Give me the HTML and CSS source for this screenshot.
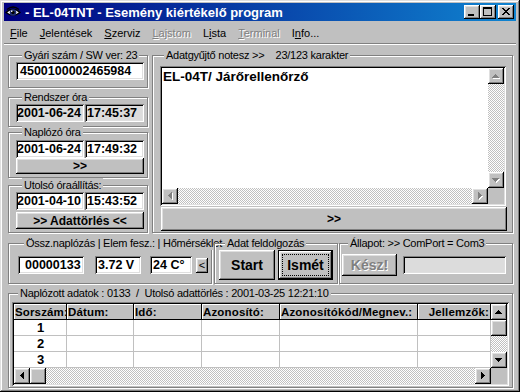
FILE: index.html
```html
<!DOCTYPE html>
<html lang="hu">
<head>
<meta charset="utf-8">
<title>EL-04TNT - Esemény kiértékelő program</title>
<link rel="stylesheet" href="styles.css">
</head>
<body>
<svg class="defs" width="0" height="0" aria-hidden="true">
  <defs>
    <symbol id="up" viewBox="0 0 16 16"><path d="M7 6h1v1H7zM6 7h3v1H6zM5 8h5v1H5zM4 9h7v1H4z"/></symbol>
    <symbol id="down" viewBox="0 0 16 16"><path d="M4 6h7v1H4zM5 7h5v1H5zM6 8h3v1H6zM7 9h1v1H7z"/></symbol>
    <symbol id="left" viewBox="0 0 16 16"><path d="M6 7h1v1H6zM7 6h1v3H7zM8 5h1v5H8zM9 4h1v7H9z"/></symbol>
    <symbol id="right" viewBox="0 0 16 16"><path d="M6 4h1v7H6zM7 5h1v5H7zM8 6h1v3H8zM9 7h1v1H9z"/></symbol>
  </defs>
</svg>
<div class="win">
  <div class="titlebar">
    <svg class="appicon" viewBox="0 0 16 16" width="16" height="16">
      <path d="M1 8.5 Q8 2 15 8.5 Q8 14 1 8.5Z" fill="#fff" stroke="#000" stroke-width="1.4"/>
      <circle cx="8" cy="8.5" r="3.3" fill="#20307a"/>
      <circle cx="8" cy="8.5" r="1.7" fill="#000"/>
      <rect x="6" y="6.5" width="1.4" height="1.4" fill="#fff"/>
      <path d="M2 5.5 Q8 0.5 14 5.5" fill="none" stroke="#000" stroke-width="1.3"/>
    </svg>
    <span class="title">- EL-04TNT - Esemény kiértékelő program</span>
    <div class="tbtns">
      <span class="tb"><svg viewBox="0 0 16 14" width="16" height="14"><rect x="4" y="9" width="6" height="2"/></svg></span>
      <span class="tb"><svg viewBox="0 0 16 14" width="16" height="14"><rect x="3" y="2" width="9" height="9"/><rect x="4" y="4" width="7" height="6" fill="#c0c0c0"/></svg></span>
      <span class="tb close"><svg viewBox="0 0 16 14" width="16" height="14"><path d="M4 3h2v1H4zM10 3h2v1h-2zM5 4h2v1H5zM9 4h2v1H9zM6 5h4v1H6zM7 6h2v1H7zM6 7h4v1H6zM5 8h2v1H5zM9 8h2v1H9zM4 9h2v1H4zM10 9h2v1h-2z"/></svg></span>
    </div>
  </div>
  <div class="menubar">
    <span class="mi"><u>F</u>ile</span>
    <span class="mi"><u>J</u>elentések</span>
    <span class="mi"><u>S</u>zerviz</span>
    <span class="mi dis"><u>L</u>ajstom</span>
    <span class="mi">L<u>i</u>sta</span>
    <span class="mi dis"><u>T</u>erminal</span>
    <span class="mi">I<u>n</u>fo...</span>
  </div>
  <div class="client">
    <div class="top">
      <div class="leftcol">
        <div class="grp g1">
          <div class="cap">Gyári szám / SW ver: 23</div>
          <div class="field wide">4500100002465984</div>
        </div>
        <div class="grp g2">
          <div class="cap">Rendszer óra</div>
          <div class="pair">
            <div class="field date ro">2001-06-24</div>
            <div class="field time ro">17:45:37</div>
          </div>
        </div>
        <div class="grp g3">
          <div class="cap">Naplózó óra</div>
          <div class="pair">
            <div class="field date">2001-06-24</div>
            <div class="field time">17:49:32</div>
          </div>
          <div class="btn small">&gt;&gt;</div>
        </div>
        <div class="grp g4">
          <div class="cap">Utolsó óraállítás:</div>
          <div class="pair">
            <div class="field date">2001-04-10</div>
            <div class="field time">15:43:52</div>
          </div>
          <div class="btn del">&gt;&gt; Adattörlés &lt;&lt;</div>
        </div>
      </div>
      <div class="grp notes">
        <div class="cap">Adatgyűjtő notesz &gt;&gt;    23/123 karakter</div>
        <div class="memo">
          <div class="memo-text">EL-04T/ Járőrellenőrző</div>
          <div class="vscroll">
            <span class="sbtn"><svg class="arr dis"><use class="hl" href="#up" x="1" y="1"/><use href="#up"/></svg></span>
            <span class="track"></span>
            <span class="sbtn"><svg class="arr dis"><use class="hl" href="#down" x="1" y="1"/><use href="#down"/></svg></span>
          </div>
          <div class="hscroll">
            <span class="sbtn"><svg class="arr dis"><use class="hl" href="#left" x="1" y="1"/><use href="#left"/></svg></span>
            <span class="track"></span>
            <span class="sbtn"><svg class="arr dis"><use class="hl" href="#right" x="1" y="1"/><use href="#right"/></svg></span>
          </div>
          <div class="corner"></div>
        </div>
        <div class="btn next">&gt;&gt;</div>
      </div>
    </div>

    <div class="mid">
      <div class="grp g5">
        <div class="cap">Össz.naplózás | Elem fesz.: | Hőmérséklet</div>
        <div class="row5">
          <div class="field cnt">00000133</div>
          <div class="field volt">3.72 V</div>
          <div class="field temp">24 C°</div>
          <div class="btn lt">&lt;</div>
        </div>
      </div>
      <div class="grp g6">
        <div class="cap">Adat feldolgozás</div>
        <div class="row6">
          <div class="btn big start">Start</div>
          <div class="btn big def"><span class="focus">Ismét</span></div>
        </div>
      </div>
      <div class="grp g7">
        <div class="cap">Állapot: &gt;&gt; ComPort = Com3</div>
        <div class="row6">
          <div class="btn big kesz">Kész!</div>
          <div class="field prog"></div>
        </div>
      </div>
    </div>

    <div class="grp g8">
      <div class="cap">Naplózott adatok : 0133  /  Utolsó adattörlés : 2001-03-25 12:21:10</div>
      <div class="sgrid">
        <div class="hd">Sorszám:</div>
        <div class="hd">Dátum:</div>
        <div class="hd">Idő:</div>
        <div class="hd">Azonosító:</div>
        <div class="hd">Azonosítókód/Megnev.:</div>
        <div class="hd r">Jellemzők:</div>
        <div class="gvs">
          <span class="sbtn"><svg class="arr"><use href="#up"/></svg></span>
          <span class="sbtn"></span>
          <span class="track"></span>
          <span class="sbtn"><svg class="arr"><use href="#down"/></svg></span>
        </div>
        <div class="cl n">1</div><div class="cl"></div><div class="cl"></div><div class="cl"></div><div class="cl"></div><div class="cl"></div>
        <div class="cl n">2</div><div class="cl"></div><div class="cl"></div><div class="cl"></div><div class="cl"></div><div class="cl"></div>
        <div class="cl n">3</div><div class="cl"></div><div class="cl"></div><div class="cl"></div><div class="cl"></div><div class="cl"></div>
        <div class="ghs">
          <span class="sbtn"><svg class="arr"><use href="#left"/></svg></span>
          <span class="sbtn"></span>
          <span class="track"></span>
          <span class="sbtn"><svg class="arr"><use href="#right"/></svg></span>
        </div>
        <div class="corner"></div>
      </div>
    </div>
  </div>
</div>
</body>
</html>
```
FILE: styles.css
```css
* { box-sizing: border-box; }
html, body { margin: 0; padding: 0; }
body {
  width: 520px; height: 392px; overflow: hidden;
  background: #c0c0c0; color: #000;
  font-family: "Liberation Sans", Arial, sans-serif; font-size: 11px;
}
.defs { position: absolute; width: 0; height: 0; }

.win {
  width: 520px; height: 392px; padding: 3px 4px;
  background: #c0c0c0;
  display: flex; flex-direction: column;
  box-shadow: inset -1px -1px #000, inset 1px 1px #dfdfdf, inset -2px -2px #808080, inset 2px 2px #fff;
}

/* title bar */
.titlebar {
  flex: none; height: 18px; display: flex; align-items: center;
  background: linear-gradient(to right, #000080, #1084d0); color: #fff;
}
.appicon { flex: none; margin-left: 1px; display: block; }
.title { margin-left: 4px; font-weight: bold; font-size: 13px; white-space: pre; }
.tbtns { margin-left: auto; margin-right: 2px; display: flex; }
.tb {
  width: 16px; height: 14px; background: #c0c0c0; display: block;
  box-shadow: inset -1px -1px #000, inset 1px 1px #fff, inset -2px -2px #808080, inset 2px 2px #dfdfdf;
}
.tb svg { display: block; fill: #000; shape-rendering: crispEdges; }
.tb.close { margin-left: 2px; }

/* menu */
.menubar { flex: none; height: 22px; display: flex; align-items: center; font-size: 11px; padding-top: 1px; }
.mi { padding: 0 6px; }
.mi.dis { color: #808080; text-shadow: 1px 1px #fff; }

/* client */
.client {
  flex: 1; display: flex; flex-direction: column;
  padding: 12px 3px 0 4px;
  box-shadow: inset 0 1px #808080, inset 0 2px #fff;
}

.grp {
  border: 1px solid #808080;
  box-shadow: inset 1px 1px #fff, 1px 1px #fff;
}
.cap {
  font-family: "Liberation Sans", Arial, sans-serif;
  font-size: 11px; letter-spacing: -0.25px; line-height: 14px; height: 14px;
  margin-top: -8px; margin-left: 6px; padding: 0 2px;
  width: max-content; background: #c0c0c0; white-space: pre;
}

.field {
  height: 18px; background: #fff;
  box-shadow: inset 1px 1px #808080, inset -1px -1px #fff, inset 2px 2px #000, inset -2px -2px #dfdfdf;
  font-weight: bold; font-size: 12.5px; line-height: 18px;
  padding: 0 4px; white-space: nowrap; overflow: hidden;
}
.field.ro { background: #dcdcdc; }

.btn {
  background: #c0c0c0;
  box-shadow: inset -1px -1px #000, inset 1px 1px #fff, inset -2px -2px #808080, inset 2px 2px #dfdfdf;
  display: flex; align-items: center; justify-content: center;
  font-weight: bold; font-size: 12px;
}

/* top section */
.top { display: flex; height: 178px; flex: none; }
.leftcol { width: 140px; flex: none; display: flex; flex-direction: column; }
.leftcol .grp { padding: 0 3px 0 7px; }
.g1 { padding-bottom: 7px !important; }
.g2 { margin-top: 9px; padding-bottom: 4px !important; }
.g3 { margin-top: 5px; padding-bottom: 3px !important; }
.g4 { margin-top: 7px; padding-bottom: 3px !important; }
.pair { display: flex; }
.g3 .pair { margin-top: 1px; }
.field.date { width: 68px; padding: 0 1px; }
.field.time { width: 59px; margin-left: 1px; padding: 0 2px; }
.btn.small { height: 16px; }
.btn.del { height: 17px; margin-top: 2px; }

.notes { flex: 1; margin-left: 4px; padding: 0 6px 1px 5px; display: flex; flex-direction: column; }
.memo {
  margin: 4px 0 0 2px; height: 140px; padding: 2px; background: #fff;
  box-shadow: inset 1px 1px #808080, inset -1px -1px #fff, inset 2px 2px #000, inset -2px -2px #dfdfdf;
  display: grid; grid-template-columns: 1fr 16px; grid-template-rows: 1fr 16px;
}
.memo-text { font-weight: bold; font-size: 13.5px; line-height: 15px; padding: 1px 1px; }
.vscroll { display: flex; flex-direction: column; }
.hscroll { display: flex; }
.corner { background: #c0c0c0; }
.sbtn {
  flex: none; width: 16px; height: 16px; display: block; background: #c0c0c0;
  box-shadow: inset -1px -1px #000, inset 1px 1px #fff, inset -2px -2px #808080, inset 2px 2px #dfdfdf;
}
.track { flex: 1; background: repeating-conic-gradient(#fff 0 25%, #c0c0c0 0 50%) 0 0 / 2px 2px; }
.arr { display: block; width: 16px; height: 16px; fill: #000; shape-rendering: crispEdges; }
.arr.dis use { fill: #808080; }
.arr.dis use.hl { fill: #fff; }
.btn.next { height: 24px; margin: 1px -1px 0 3px; font-size: 12px; }

/* middle row */
.mid { display: flex; height: 41px; margin-top: 10px; flex: none; }
.g5 { width: 204px; padding: 0 0 9px 9px; }
.row5 { display: flex; align-items: center; margin-top: 6px; }
.field.cnt { width: 66px; padding-left: 7px; }
.field.volt { width: 46px; margin-left: 11px; padding-left: 3px; }
.field.temp { width: 42px; margin-left: 9px; padding-left: 3px; }
.btn.lt { width: 12px; height: 15px; margin-left: 4px; font-weight: normal; font-size: 11px; }

.g6 { width: 124px; margin-left: 2px; padding: 0 0 3px 4px; }
.row6 { display: flex; align-items: center; height: 30px; }
.btn.big { font-size: 14px; height: 30px; }
.btn.start { width: 56px; }
.btn.def {
  width: 55px; margin-left: 3px;
  box-shadow: inset 0 0 0 1px #000, inset -2px -2px #000, inset 2px 2px #fff, inset -3px -3px #808080, inset 3px 3px #dfdfdf;
}
.focus {
  flex: 1; align-self: stretch; margin: 4px;
  border: 1px dotted #000;
  display: flex; align-items: center; justify-content: center;
}
.g7 { flex: 1; margin-left: 1px; padding: 0 0 3px 2px; }
.btn.kesz { width: 55px; height: 22px; color: #808080; text-shadow: 1px 1px #fff; }
.field.prog { width: 103px; margin-left: 6px; background: #dcdcdc; }

/* bottom grid */
.g8 { margin-top: 9px; height: 95px; flex: none; padding: 0 3px 1px 3px; }
.sgrid {
  margin-top: 2px; height: 84px; padding: 2px; background: #fff;
  box-shadow: inset 1px 1px #808080, inset -1px -1px #fff, inset 2px 2px #000, inset -2px -2px #dfdfdf;
  display: grid;
  grid-template-columns: 53px 67px 68px 78px 138px 73px 16px;
  grid-template-rows: repeat(5, 16px);
}
.hd {
  background: #c0c0c0; font-weight: bold; font-size: 11.5px; letter-spacing: 0.15px; line-height: 16px;
  padding-left: 1px; white-space: nowrap;
  box-shadow: inset -1px -1px #000, inset 1px 1px #fff;
}
.hd.r { text-align: right; padding-right: 2px; }
.cl { background: #fff; box-shadow: inset -1px -1px #c0c0c0; }
.cl.n { font-weight: bold; font-size: 13px; line-height: 16px; text-align: center; }
.gvs { grid-column: 7; grid-row: 1 / 5; display: flex; flex-direction: column; }
.ghs { grid-column: 1 / 7; grid-row: 5; display: flex; }
```
